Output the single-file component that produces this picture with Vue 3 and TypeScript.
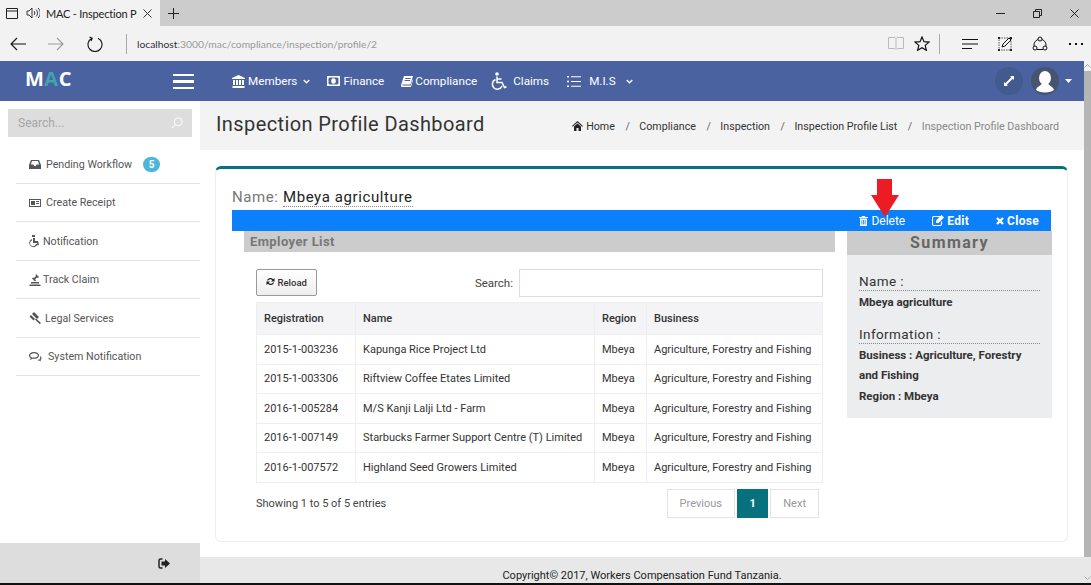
<script setup lang="ts">
interface SideItem {
  label: string;
  icon: string;
  gap: number;
  badge?: number;
}

const sideItems: SideItem[] = [
  { label: 'Pending Workflow', icon: 'M3 3h8l2 5v4H1V8zM4 4 2.800 7.500h2.600l.8 1.500h1.600l.8-1.500h2.600L10 4z', gap: 4, badge: 5 },
  { label: 'Create Receipt', icon: 'M1 3h12v8H1zM2 4v6h10V4zM3 5h4v4H3zM8 5h3v1H8zM8 7h3v1H8z', gap: 4 },
  { label: 'Notification', icon: 'M4 1h3v2H4zM5 4h2v3h3l1 4-1.500.5L9 9H5zM4 5v1.500a3 3 0 1 0 4 3.500h1.500A4.200 4.200 0 1 1 4 5z', gap: 1 },
  { label: 'Track Claim', icon: 'M8 1l3 3-1 1-1-.500-2 2 1 1-1 1-3-3 1-1 1 .500 2-2-.500-1zM3 9h8v1.500H3zM1.500 11.500h11V13h-11z', gap: 1 },
  { label: 'Legal Services', icon: 'M6 1l5 5-2 2-5-5zM3 4l4 4-1.500 1.500-4-4zM8 7.500l5 4.500-1.200 1.300L7 8.500z', gap: 3 },
  { label: 'System Notification', icon: 'M6 2c3 0 5 1.400 5 3.400S9 8.800 6 8.800H4.500L2 10l.7-2C1.600 7.400 1 6.500 1 5.400 1 3.400 3 2 6 2zm0 1.200c-2.300 0-3.800 1-3.800 2.200 0 .8.600 1.400 1.700 1.900L3.700 8l1-.4H6c2.300 0 3.800-1 3.800-2.200S8.300 3.200 6 3.200zM12 6c1 .5 1.500 1.300 1.500 2.200 0 .8-.4 1.400-1 1.900l.5 1.400-2-1H9.500l1-1h1l.3-.6c.3-.2.500-.5.500-.8L12 7z', gap: 6 },
];

const crumbs = ['Compliance', 'Inspection', 'Inspection Profile List'];

const rows = [
  { reg: '2015-1-003236', name: 'Kapunga Rice Project Ltd' },
  { reg: '2015-1-003306', name: 'Riftview Coffee Etates Limited' },
  { reg: '2016-1-005284', name: 'M/S Kanji Lalji Ltd - Farm' },
  { reg: '2016-1-007149', name: 'Starbucks Farmer Support Centre (T) Limited' },
  { reg: '2016-1-007572', name: 'Highland Seed Growers Limited' },
];
</script>

<template>
  <div class="screen">
    <div class="tabs">
      <div class="tab">
        <svg class="tab-page" width="12" height="11" viewBox="0 0 12 11"><path d="M.5.500h11v10H.500zM.5 3h11" fill="none" stroke="#222" /></svg>
        <svg class="tab-sound" width="14" height="12" viewBox="0 0 14 12"><path d="M1 4h2l3-3v10L3 8H1zM8 4c1 1 1 3 0 4M10 2.500c2 2 2 5 0 7M12 1c3 3 3 7 0 10" fill="none" stroke="#222" stroke-width=".9" /></svg>
        <span class="tab-title">MAC - Inspection P</span>
        <svg class="tab-x" width="9" height="9" viewBox="0 0 9 9"><path d="M.5.500l8 8M8.500.500l-8 8" stroke="#333" fill="none" /></svg>
      </div>
      <svg class="tab-plus" width="11" height="11" viewBox="0 0 11 11"><path d="M5.500 0v11M0 5.500h11" stroke="#222" fill="none" /></svg>
      <div class="win-btns">
        <svg width="9" height="9" viewBox="0 0 9 9"><path d="M0 4.500h9" stroke="#222" fill="none" /></svg>
        <svg width="9" height="9" viewBox="0 0 9 9"><path d="M.5 2.500h6v6h-6zM2.500 2.500v-2h6v6h-2" stroke="#222" fill="none" /></svg>
        <svg width="9" height="9" viewBox="0 0 9 9"><path d="M.5.500l8 8M8.500.500l-8 8" stroke="#222" fill="none" /></svg>
      </div>
    </div>

    <div class="addr">
      <svg class="a-back" width="16" height="14" viewBox="0 0 16 14"><path d="M16 7H1M7 1 1 7l6 6" fill="none" stroke="#111" stroke-width="1.100" /></svg>
      <svg class="a-fwd" width="16" height="14" viewBox="0 0 16 14"><path d="M0 7h15M9 1l6 6-6 6" fill="none" stroke="#999" stroke-width="1.100" /></svg>
      <svg class="a-reload" width="16" height="16" viewBox="0 0 16 16"><path d="M5 2.200A7 7 0 1 0 11 2.200M2.500 1l2.700 1.300L4 5" fill="none" stroke="#111" stroke-width="1.100" /></svg>
      <span class="a-sep"></span>
      <span class="a-url"><b>localhost</b>:3000/mac/compliance/inspection/profile/2</span>
      <svg class="a-book" width="16" height="15" viewBox="0 0 16 15"><path d="M.5 1.500h6.500l1 1 1-1h6.500v11H9l-1 1-1-1H.500zM8 2.500v10" fill="none" stroke="#bbb" /></svg>
      <svg class="a-star" width="16" height="15" viewBox="0 0 16 15"><path d="M8 1l2 4.700 5 .4-3.800 3.300 1.200 4.900L8 11.700l-4.400 2.600 1.200-4.900L1 6.100l5-.4z" fill="none" stroke="#111" stroke-width="1.200" /></svg>
      <span class="a-sep2"></span>
      <svg class="a-hub" width="16" height="12" viewBox="0 0 16 12"><path d="M0 1.500h16M0 6h16M0 10.500h10" fill="none" stroke="#111" /></svg>
      <svg class="a-note" width="16" height="16" viewBox="0 0 16 16"><path d="M2 2h12v12H2z" fill="none" stroke="#555" stroke-dasharray="1.500 1" /><path d="M1 1h2v2H1zM13 1h2v2h-2zM1 13h2v2H1zM13 13h2v2h-2z" fill="#222" /><path d="M5 11l1-3 6-6 2 2-6 6z" fill="#f2f2f2" stroke="#111" /></svg>
      <svg class="a-share" width="16" height="16" viewBox="0 0 16 16"><circle cx="8" cy="3" r="2" fill="none" stroke="#111" /><circle cx="3" cy="12" r="2" fill="none" stroke="#111" /><circle cx="13" cy="12" r="2" fill="none" stroke="#111" /><path d="M6 3.500a6.500 6.500 0 0 0-4 6.700M10 3.500a6.500 6.500 0 0 1 4 6.700M5 13.500h6" fill="none" stroke="#111" /></svg>
      <span class="a-dots"><i></i><i></i><i></i></span>
    </div>

    <div class="viewport">
      <div class="page">
        <header class="nav">
          <div class="logo">M<em>A</em>C</div>
          <div class="burger"><i></i><i></i><i></i></div>
          <div class="nav-links">
            <a class="n-members">
              <svg width="13" height="13" viewBox="0 0 13 13"><path d="M6.500 0 13 3v1H0V3zM1 5h2v5H1zM4 5h2v5H4zM7 5h2v5H7zM10 5h2v5h-2zM.5 11h12v2H.5z" fill="#fff" /></svg>
              <span>Members</span>
              <svg class="chev" width="7" height="5" viewBox="0 0 7 5"><path d="M.7 1 3.500 3.800 6.300 1" fill="none" stroke="#fff" stroke-width="1.300" /></svg>
            </a>
            <a class="n-finance">
              <svg width="13" height="10" viewBox="0 0 13 10"><path fill-rule="evenodd" d="M0 0h13v10H0zM2.500 1.500 1.500 2.500v5l1 1h8l1-1v-5l-1-1zM6.500 2.200a2.300 2.800 0 1 1 0 5.600 2.300 2.800 0 0 1 0-5.600z" fill="#fff" /></svg>
              <span>Finance</span>
            </a>
            <a class="n-compliance">
              <svg width="12" height="11" viewBox="0 0 12 11"><path d="M3 0h9l-2.500 8.500H1.800c-.6 0-.8.800-.2 1H9.800l1.700-6 .5.500L10 11H1.500C.3 11-.3 9.800.2 8.500zM4.300 2l-.2 1h5.500l.2-1zM3.700 4l-.2 1H9l.2-1z" fill="#fff" /></svg>
              <span>Compliance</span>
            </a>
            <a class="n-claims">
              <svg width="16" height="19" viewBox="0 0 16 19"><circle cx="6" cy="2" r="1.800" fill="#fff" /><path d="M6 4.500v6h5l2.500 5 2-.8M6 7h4.500M4.500 7.500a5 5 0 1 0 6.500 6.500" fill="none" stroke="#fff" stroke-width="1.500" /></svg>
              <span>Claims</span>
            </a>
            <a class="n-mis">
              <svg width="14" height="11" viewBox="0 0 14 11"><path d="M0 0h2v1.500H0zM0 4.700h2v1.500H0zM0 9.500h2V11H0zM4 .2h10v1H4zM4 5h10v1H4zM4 9.800h10v1H4z" fill="#fff" /></svg>
              <span>M.I.S</span>
              <svg class="chev" width="7" height="5" viewBox="0 0 7 5"><path d="M.7 1 3.500 3.800 6.300 1" fill="none" stroke="#fff" stroke-width="1.300" /></svg>
            </a>
          </div>
          <div class="nav-right">
            <span class="round expand">
              <svg width="10" height="10" viewBox="0 0 10 10"><path d="M6 0h4v4L8.700 2.700 2.700 8.700 4 10H0V6l1.300 1.300 6-6z" fill="#fff" /></svg>
            </span>
            <span class="round avatar">
              <svg width="28" height="28" viewBox="0 0 28 28"><ellipse cx="14" cy="11" rx="6" ry="7" fill="#fff" /><path d="M11 16c0 2.500-5 3-6 7 2 1.500 5 2.500 9 2.500s7-1 9-2.500c-1-4-6-4.500-6-7z" fill="#fff" /></svg>
            </span>
            <svg class="caret" width="7" height="4" viewBox="0 0 7 4"><path d="M0 0h7L3.500 4z" fill="#fff" /></svg>
          </div>
        </header>

        <div class="body">
          <aside class="side">
            <div class="side-search">
              <span>Search...</span>
              <svg width="12" height="12" viewBox="0 0 12 12"><circle cx="7.200" cy="4.800" r="4" fill="none" stroke="#fff" /><path d="M4.300 7.700.8 11.200" stroke="#fff" fill="none" /></svg>
            </div>
            <ul class="side-menu">
              <li v-for="item in sideItems" :key="item.label">
                <svg width="14" height="14" viewBox="0 0 14 14"><path :d="item.icon" fill="#555" fill-rule="evenodd" /></svg>
                <span class="side-label" :style="{ marginLeft: item.gap + 'px' }">{{ item.label }}</span>
                <span v-if="item.badge" class="badge">{{ item.badge }}</span>
              </li>
            </ul>
            <div class="side-foot">
              <svg width="12" height="11" viewBox="0 0 12 11"><path d="M4.500 1H2.500C1.400 1 1 1.800 1 2.500v6C1 9.400 1.600 10 2.500 10h2" fill="none" stroke="#222" stroke-width="1.500" /><path d="M7 1l5 4.500L7 10V7.500H3.500v-4H7z" fill="#222" /></svg>
            </div>
          </aside>

          <main class="content">
            <div class="head">
              <h1>Inspection Profile Dashboard</h1>
              <nav class="crumbs">
                <svg width="11" height="10" viewBox="0 0 11 10"><path d="M5.500 0 11 5l-.7.700-4.800-4.300L.7 5.700 0 5zM2 5.500l3.500-3 3.500 3V10H6.500V7h-2v3H2z" fill="#222" /></svg>
                <span class="c-home">Home</span>
                <template v-for="c in crumbs" :key="c">
                  <span class="c-sep">/</span><span>{{ c }}</span>
                </template>
                <span class="c-sep">/</span><span class="c-last">Inspection Profile Dashboard</span>
              </nav>
            </div>

            <section class="card">
              <div class="name-line"><span class="name-k">Name:</span> <span class="name-v">Mbeya agriculture</span></div>
              <div class="bluebar">
                <a class="b-del">
                  <svg width="9" height="10" viewBox="0 0 9 10"><path d="M3 0h3l.5 1H9v1H0V1h2.500zM1 2.500h7V10H1zM2.500 4v4.500h.8V4zM4.100 4v4.500h.8V4zM5.700 4v4.500h.8V4z" fill="#fff" fill-rule="evenodd" /></svg>
                  Delete
                </a>
                <a class="b-edit">
                  <svg width="12" height="11" viewBox="0 0 12 11"><path d="M8 1.500H2A1.500 1.500 0 0 0 .5 3v6A1.500 1.500 0 0 0 2 10.500h6A1.500 1.500 0 0 0 9.500 9V6.500" fill="none" stroke="#fff" stroke-width="1.200" /><path d="M4 5.500 9.500 0 12 2.500 6.500 8H4z" fill="#fff" /></svg>
                  Edit
                </a>
                <a class="b-close">
                  <svg width="8" height="8" viewBox="0 0 8 8"><path d="M1 1l6 6M7 1 1 7" stroke="#fff" stroke-width="2.400" fill="none" /></svg>
                  Close
                </a>
              </div>
              <div class="columns">
                <div class="left">
                  <div class="list-title">Employer List</div>
                  <div class="list-body">
                    <div class="toolbar">
                      <button class="reload" type="button">
                        <svg width="9" height="9" viewBox="0 0 10 10"><path d="M1 4a4 4 0 0 1 7-1.500L9.500 1v4h-4l1.500-1.500A2.700 2.700 0 0 0 2.400 4zM9 6a4 4 0 0 1-7 1.500L.5 9V5h4L3 6.500A2.700 2.700 0 0 0 7.600 6z" fill="#222" /></svg>
                        Reload
                      </button>
                      <label class="filter">Search: <input type="text" /></label>
                    </div>
                    <table>
                      <thead>
                        <tr><th class="c1">Registration</th><th class="c2">Name</th><th class="c3">Region</th><th>Business</th></tr>
                      </thead>
                      <tbody>
                        <tr v-for="r in rows" :key="r.reg">
                          <td>{{ r.reg }}</td>
                          <td>{{ r.name }}</td>
                          <td>Mbeya</td>
                          <td>Agriculture, Forestry and Fishing</td>
                        </tr>
                      </tbody>
                    </table>
                    <div class="tfoot">
                      <span class="entries">Showing 1 to 5 of 5 entries</span>
                      <div class="pager">
                        <span class="pg">Previous</span>
                        <span class="pg active">1</span>
                        <span class="pg">Next</span>
                      </div>
                    </div>
                  </div>
                </div>
                <aside class="summary">
                  <div class="sum-title">Summary</div>
                  <div class="sum-body">
                    <div class="sum-h">Name :</div>
                    <p>Mbeya agriculture</p>
                    <div class="sum-h second">Information :</div>
                    <p>Business : Agriculture, Forestry and Fishing</p>
                    <p>Region : Mbeya</p>
                  </div>
                </aside>
              </div>
              <svg class="arrow" width="28" height="38" viewBox="0 0 28 38"><path d="M6 0h15v16h7L14 38 0 16h6z" fill="#ed1c24" /></svg>
            </section>

            <footer class="foot">Copyright© 2017, Workers Compensation Fund Tanzania.</footer>
          </main>
        </div>
      </div>
      <div class="scroll">
        <span class="s-end"><svg width="7" height="4" viewBox="0 0 7 4"><path d="M.5 3.500l3-3 3 3" fill="none" stroke="#aaa" /></svg></span>
        <span class="s-thumb"></span>
        <span class="s-end low"><svg width="7" height="4" viewBox="0 0 7 4"><path d="M.5.500l3 3 3-3" fill="none" stroke="#aaa" /></svg></span>
      </div>
    </div>
    <div class="taskbar"></div>
  </div>
</template>

<style scoped>
.screen {
  width: 1091px;
  height: 585px;
  display: flex;
  flex-direction: column;
  overflow: hidden;
  font-family: Roboto, "Liberation Sans", sans-serif;
  background: #fff;
  color: #333;
}
.tabs {
  height: 26px;
  flex: none;
  display: flex;
  align-items: center;
  background: #ccc;
}
.tab {
  width: 160px;
  height: 26px;
  background: #f2f2f2;
  display: flex;
  align-items: center;
  padding-left: 6px;
  box-sizing: border-box;
}
.tab-sound {
  margin-left: 8px;
}
.tab-title {
  margin-left: 6px;
  width: 97px;
  white-space: nowrap;
  font: 11px Lato, sans-serif;
  letter-spacing: -.2px;
  color: #222;
}
.tab-plus {
  margin-left: 8px;
}
.win-btns {
  margin-left: auto;
  margin-right: 12px;
  display: flex;
  gap: 28px;
}
.addr {
  height: 35px;
  flex: none;
  display: flex;
  align-items: center;
  background: #f2f2f2;
  padding-left: 10px;
}
.a-fwd {
  margin-left: 22px;
}
.a-reload {
  margin-left: 23px;
}
.a-sep {
  width: 1px;
  height: 20px;
  background: #aaa;
  margin-left: 23px;
}
.a-url {
  margin-left: 10px;
  width: 751px;
  font: 10.300px Lato, sans-serif;
  color: #999;
  white-space: nowrap;
}
.a-url b {
  font-weight: 400;
  color: #333;
}
.a-star {
  margin-left: 10px;
}
.a-sep2 {
  width: 1px;
  height: 20px;
  background: #aaa;
  margin-left: 9px;
}
.a-hub {
  margin-left: 22px;
}
.a-note {
  margin-left: 19px;
}
.a-share {
  margin-left: 19px;
}
.a-dots {
  margin-left: 21px;
  display: flex;
  gap: 4px;
}
.a-dots i {
  width: 2px;
  height: 2px;
  background: #111;
}
.viewport {
  flex: 1;
  min-height: 0;
  display: flex;
}
.page {
  flex: 1;
  min-width: 0;
  display: flex;
  flex-direction: column;
}
.nav {
  height: 40px;
  flex: none;
  background: #4a63a0;
  color: #fff;
  display: flex;
  align-items: center;
  font-size: 11.700px;
}
.logo {
  width: 173px;
  padding-left: 25px;
  box-sizing: border-box;
  font: 700 20px/1 "Open Sans", sans-serif;
  letter-spacing: .5px;
  margin-top: -5px;
}
.logo em {
  font-style: normal;
  color: #3fa3b2;
}
.burger {
  width: 21px;
  display: flex;
  flex-direction: column;
  gap: 4px;
  margin-top: 1px;
}
.burger i {
  height: 2.500px;
  background: #fff;
}
.nav-links {
  margin-left: 38px;
  display: flex;
  align-items: center;
}
.nav-links a {
  display: flex;
  align-items: center;
}
.n-members span {
  margin-left: 3px;
}
.chev {
  margin-left: 6px;
}
.n-finance {
  margin-left: 17px;
}
.n-finance span {
  margin-left: 3px;
}
.n-compliance {
  margin-left: 17px;
}
.n-compliance span {
  margin-left: 2px;
}
.n-claims {
  margin-left: 14px;
}
.n-claims span {
  margin-left: 6px;
}
.n-mis {
  margin-left: 18px;
}
.n-mis span {
  margin-left: 8px;
}
.n-mis .chev {
  margin-left: 10px;
}
.nav-right {
  margin-left: auto;
  display: flex;
  align-items: center;
  margin-right: 12px;
}
.round {
  width: 28px;
  height: 28px;
  border-radius: 50%;
  display: flex;
  align-items: center;
  justify-content: center;
  overflow: hidden;
}
.expand {
  background: #435a8f;
}
.avatar {
  background: #465470;
  margin-left: 8px;
}
.caret {
  margin-left: 6px;
}
.body {
  flex: 1;
  min-height: 0;
  display: flex;
}
.side {
  width: 200px;
  flex: none;
  display: flex;
  flex-direction: column;
  background: #fff;
}
.side-search {
  margin: 8px 8px 0;
  height: 28px;
  background: #ddd;
  display: flex;
  align-items: center;
  justify-content: space-between;
  padding: 0 9px 0 10px;
  font-size: 12px;
  color: #a5a5a5;
}
.side-menu {
  list-style: none;
  margin: 8px 0 0 16px;
  padding: 0;
  flex: 1;
}
.side-menu li {
  height: 36.500px;
  border-bottom: 1px solid #e2e2e8;
  display: flex;
  align-items: center;
  padding: 1px 0 0 12px;
  font-size: 10.700px;
  color: #555;
}
.badge {
  margin-left: 11px;
  width: 17px;
  height: 15px;
  border-radius: 8px;
  background: #4cb6da;
  color: #fff;
  font-size: 10px;
  font-weight: 700;
  display: flex;
  align-items: center;
  justify-content: center;
}
.side-foot {
  height: 40px;
  flex: none;
  background: #ddd;
  display: flex;
  align-items: center;
  justify-content: flex-end;
  padding-right: 30px;
}
.content {
  flex: 1;
  min-width: 0;
  display: flex;
  flex-direction: column;
  background: #fff;
}
.head {
  height: 49px;
  flex: none;
  background: #f3f3f3;
  display: flex;
  align-items: center;
  justify-content: space-between;
  padding: 0 25px 0 16px;
}
.head h1 {
  margin: -3px 0 0;
  font-size: 20px;
  font-weight: 400;
  letter-spacing: .4px;
  color: #333;
}
.crumbs {
  display: flex;
  align-items: center;
  margin-top: 1px;
  font-size: 10.700px;
  color: #333;
  white-space: nowrap;
}
.c-home {
  margin-left: 3px;
}
.c-sep {
  margin: 0 9.500px 0 10.500px;
  color: #666;
}
.c-last {
  color: #888;
}
.card {
  position: relative;
  margin: 16px 16px 0 15px;
  height: 376px;
  flex: none;
  box-sizing: border-box;
  border: 1px solid #eee;
  border-top: 3px solid #07717e;
  border-radius: 6px;
  padding: 0 16px;
}
.name-line {
  margin-top: 19px;
  height: 22px;
  font-size: 15px;
  letter-spacing: .6px;
  color: #777;
}
.name-v {
  color: #222;
  border-bottom: 1px dotted #888;
}
.bluebar {
  height: 21px;
  background: #0c80fa;
  color: #fff;
  display: flex;
  align-items: center;
  justify-content: flex-end;
  font-size: 12px;
  padding-right: 12px;
}
.bluebar a {
  display: flex;
  align-items: center;
  gap: 3px;
}
.b-edit,
.b-close {
  font-weight: 700;
  letter-spacing: .3px;
}
.b-edit {
  margin-left: 27px;
}
.b-close {
  margin-left: 27px;
}
.columns {
  display: flex;
  gap: 12px;
  padding-left: 12px;
  align-items: flex-start;
}
.left {
  width: 591px;
  flex: none;
}
.list-title {
  height: 21px;
  line-height: 21px;
  background: #ccc;
  padding-left: 6px;
  font-size: 13px;
  font-weight: 700;
  letter-spacing: .4px;
  color: #777;
}
.list-body {
  padding: 17px 12px 0;
}
.toolbar {
  display: flex;
  align-items: flex-start;
  justify-content: space-between;
  height: 33px;
}
.reload {
  width: 61px;
  height: 27px;
  box-sizing: border-box;
  border: 1px solid #999;
  border-radius: 2px;
  background: linear-gradient(#fff, #eee);
  font: 500 9.500px Roboto, sans-serif;
  color: #333;
  padding: 0;
}
.filter {
  display: flex;
  align-items: center;
  gap: 6px;
  font-size: 11.500px;
  color: #444;
}
.filter input {
  width: 304px;
  height: 28px;
  box-sizing: border-box;
  border: 1px solid #ddd;
  margin: 0;
  padding: 0;
  background: #fff;
}
table {
  width: 567px;
  border-collapse: collapse;
  table-layout: fixed;
  font-size: 11px;
  color: #333;
}
th,
td {
  border: 1px solid #eee;
  text-align: left;
  padding: 0 0 0 7px;
  white-space: nowrap;
}
th {
  height: 31px;
  background: #f4f4f6;
  font-weight: 500;
  color: #333;
}
td {
  height: 28.500px;
}
.c1 {
  width: 91px;
}
.c2 {
  width: 231px;
}
.c3 {
  width: 44px;
}
.tfoot {
  display: flex;
  align-items: center;
  justify-content: space-between;
  margin-top: 6px;
  padding-right: 4px;
  font-size: 11px;
  color: #444;
}
.entries {
  margin-top: 1px;
}
.pager {
  display: flex;
  gap: 2px;
}
.pg {
  height: 29px;
  box-sizing: border-box;
  border: 1px solid #e3e3e3;
  padding: 0 12px;
  line-height: 27px;
  font-size: 11px;
  color: #999;
}
.pg.active {
  padding: 0 11.500px;
  background: #07717e;
  border-color: #07717e;
  color: #fff;
  font-weight: 700;
}
.summary {
  width: 205px;
  flex: none;
  background: #ecedef;
  height: 187px;
}
.sum-title {
  height: 24px;
  line-height: 24px;
  background: #ccc;
  text-align: center;
  font-size: 16px;
  font-weight: 700;
  letter-spacing: 1.400px;
  color: #666;
}
.sum-body {
  padding: 17px 12px 0;
  font-size: 11.500px;
  font-weight: 700;
  color: #333;
}
.sum-h {
  font-size: 13.500px;
  font-weight: 400;
  letter-spacing: .4px;
  line-height: 18px;
  border-bottom: 1px dotted #888;
  margin-bottom: 1px;
  color: #333;
}
.sum-h.second {
  margin-top: 12px;
}
.sum-body p {
  margin: 0;
  line-height: 20.500px;
}
.arrow {
  position: absolute;
  left: 655px;
  top: 10px;
}
.foot {
  flex: 1;
  margin-top: 15px;
  background: #e8e8e8;
  text-align: center;
  font-size: 11px;
  line-height: 13px;
  padding-top: 12px;
  color: #222;
  overflow: hidden;
}
.scroll {
  width: 7px;
  flex: none;
  display: flex;
  flex-direction: column;
}
.s-end {
  height: 10px;
  background: #f2f2f2;
  display: flex;
  align-items: center;
  justify-content: center;
}
.s-end.low {
  height: 26px;
  background: #e8e8e8;
  align-items: flex-end;
  padding-bottom: 3px;
  box-sizing: border-box;
}
.s-thumb {
  flex: 1;
  background: #b5b5b5;
}
.taskbar {
  height: 2px;
  flex: none;
  background: #111;
}
</style>
